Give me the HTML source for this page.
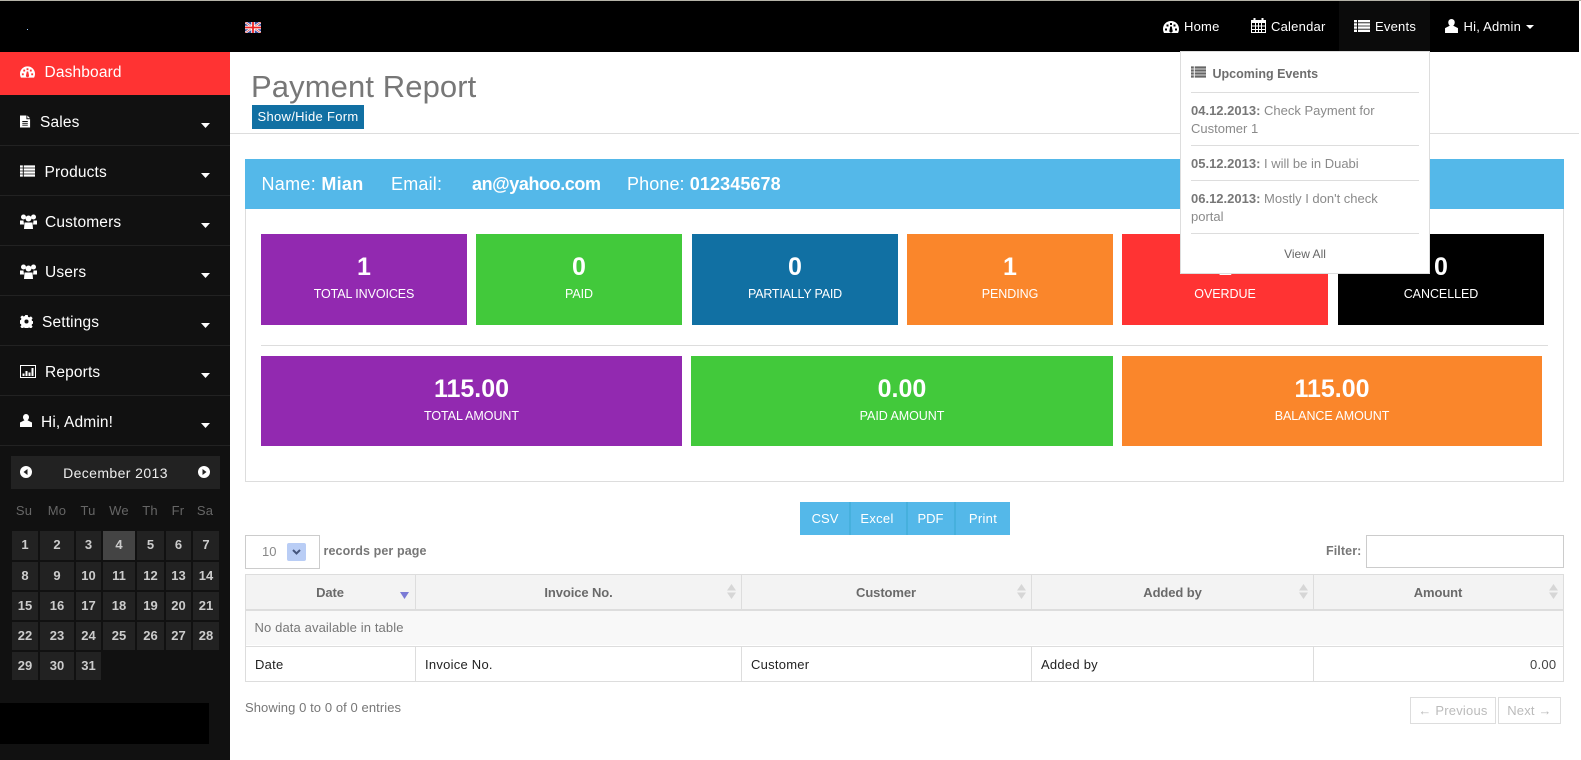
<!DOCTYPE html>
<html><head><meta charset="utf-8"><title>Payment Report</title>
<style>
*{box-sizing:border-box}
html,body{margin:0;padding:0;width:1581px;height:760px;overflow:hidden;background:#fff;font-family:"Liberation Sans",Arial,sans-serif}
.a{position:absolute}
.t{position:absolute;white-space:nowrap;line-height:20px;height:20px}
.s{font-size:15.500px;color:#fff;letter-spacing:.15px}
.n{font-size:13px;color:#fff;letter-spacing:.22px}
.c{text-align:center;transform:translateX(-50%)}
.d{position:absolute;background:#222;color:#ccc;font-size:13px;font-weight:bold;text-align:center;line-height:28px}
.w{position:absolute;top:501px;color:#666;font-size:13px;line-height:20px;transform:translateX(-50%);letter-spacing:.2px}
.card{position:absolute;color:#fff;text-align:center}
.card b{position:absolute;left:0;right:0;font-size:25px;line-height:28px;font-weight:bold;top:19px}
.card span{position:absolute;left:0;right:0;font-size:12.500px;line-height:18px;letter-spacing:-.05px;top:51px}
.l{position:absolute;background:#ddd}
.th{position:absolute;top:583px;font-size:13px;font-weight:bold;color:#6a6a6a;line-height:20px;transform:translateX(-50%);letter-spacing:-.1px;white-space:nowrap}
.td{position:absolute;top:655px;font-size:13px;color:#222;line-height:20px;letter-spacing:.25px;white-space:nowrap}
.g{color:#777;font-size:13px;letter-spacing:.12px}
.e{color:#8a8a8a;font-size:13px;letter-spacing:0;line-height:18px;left:1191px;position:absolute;white-space:nowrap}
.e b{color:#777}
svg{position:absolute;display:block}
</style></head><body>
<svg width="0" height="0" style="position:absolute">
<defs>
<symbol id="dash" viewBox="0 0 16 12"><path fill="currentColor" fill-rule="evenodd" d="M8 0C3.6 0 0 3.3 0 8c0 1.500.4 2.800 1 4h14c.6-1.200 1-2.500 1-4 0-4.700-3.600-8-8-8zM7 2h2v2H7zM3.500 3.500h2v2h-2zM10.500 3.500h2v2h-2zM2 7.500h2v2H2zM12 7.500h2v2h-2zM7.200 5.500h1.600l.7 3.600A1.700 1.700 0 1 1 6.500 9.100z"/></symbol>
<symbol id="file" viewBox="0 0 12 13"><path fill="currentColor" fill-rule="evenodd" d="M0 0h7v4h4v9H0zM8 0l3 3H8zM2.500 6v1h6V6zM2.500 8v1h6V8zM2.500 10v1h6v-1z"/></symbol>
<symbol id="list" viewBox="0 0 16 12"><path fill="currentColor" d="M0 0h3v2.400H0zM4 0h12v2.400H4zM0 3.200h3v2.400H0zM4 3.200h12v2.400H4zM0 6.400h3v2.400H0zM4 6.400h12v2.400H4zM0 9.600h3V12H0zM4 9.600h12V12H4z"/></symbol>
<symbol id="group" viewBox="0 0 17 15"><g fill="currentColor"><circle cx="3.500" cy="3" r="2.500"/><circle cx="13.500" cy="3" r="2.500"/><circle cx="8.500" cy="4.500" r="3"/><path d="M0 6.500h3.500L4 10.500H0zM13.500 6.500H17v4h-4zM4.500 8.500h8l.5 6.500H4z"/></g></symbol>
<symbol id="cog" viewBox="0 0 14 14"><path fill="currentColor" fill-rule="evenodd" d="M5.700 0h2.600l.4 2 1.300.6 1.800-1.100 1.800 1.800-1.100 1.800.5 1.300 2 .4v2.400l-2 .5-.5 1.200 1.100 1.800-1.800 1.800-1.800-1.100-1.300.5-.4 2H5.700l-.4-2-1.300-.5-1.800 1.100-1.800-1.800 1.100-1.800-.5-1.200-2-.5V5.800l2-.4.5-1.300-1.100-1.800 1.800-1.800L4 1.600l1.300-.6zM7 4.800a2.200 2.200 0 1 0 0 4.400 2.200 2.200 0 0 0 0-4.400z"/></symbol>
<symbol id="chart" viewBox="0 0 16 13"><path fill="currentColor" fill-rule="evenodd" d="M0 0h16v13H0zM1 1v11h14V1z"/><path fill="currentColor" d="M2.500 8.500h2V11h-2zM5.500 6h2v5h-2zM8.500 7.500h2V11h-2zM11.500 3h2v8h-2z"/></symbol>
<symbol id="user" viewBox="0 0 12 13"><path fill="currentColor" d="M6 0a3 3 0 0 1 3 3.200c0 1.300-.8 2.500-1.500 3l4.500 2.300V13H0V8.500l4.500-2.300C3.800 5.700 3 4.500 3 3.200A3 3 0 0 1 6 0z"/></symbol>
<symbol id="cal" viewBox="0 0 15 15"><path fill="currentColor" fill-rule="evenodd" d="M2.500 0h2v2h6V0h2v2H15v13H0V2h2.500zM1 5v2.500h3V5zM5 5v2.500h2V5zM8 5v2.500h2V5zM11 5v2.500h3V5zM1 8.500V11h3V8.500zM5 8.500V11h2V8.500zM8 8.500V11h2V8.500zM11 8.500V11h3V8.500zM1 12v2h3v-2zM5 12v2h2v-2zM8 12v2h2v-2zM11 12v2h3v-2z"/></symbol>
<symbol id="sort" viewBox="0 0 9 15"><path fill="#d6d6d6" d="M4.500 0L9 6.500H0zM0 8.500h9L4.500 15z"/></symbol>
</defs></svg>

<!-- top bar -->
<div class="a" style="left:0;top:0;width:1581px;height:1px;background:#b5b3a8"></div>
<div class="a" style="left:0;top:1px;width:1579px;height:51px;background:#000"></div>
<div class="a" style="left:27px;top:29px;width:1px;height:1px;background:#9cf"></div>
<svg style="left:245px;top:22px" width="16" height="11" viewBox="0 0 16 11"><rect width="16" height="11" fill="#3b4d9e"/><path d="M0 0L16 11M16 0L0 11" stroke="#fff" stroke-width="2.200"/><path d="M0 0L16 11M16 0L0 11" stroke="#d33" stroke-width=".7"/><path d="M8 0v11M0 5.500h16" stroke="#fff" stroke-width="3.500"/><path d="M8 0v11M0 5.500h16" stroke="#e22" stroke-width="1.800"/></svg>
<div class="a" style="left:1339px;top:1px;width:91px;height:51px;background:#0b0b0b"></div>
<svg style="left:1163px;top:21px;color:#fff" width="16" height="12"><use href="#dash"/></svg>
<div class="t n" style="left:1184px;top:17px">Home</div>
<svg style="left:1251px;top:18px;color:#fff" width="15" height="15"><use href="#cal"/></svg>
<div class="t n" style="left:1271px;top:17px">Calendar</div>
<svg style="left:1354px;top:20px;color:#fff" width="16" height="12"><use href="#list"/></svg>
<div class="t n" style="left:1375px;top:17px">Events</div>
<svg style="left:1445px;top:19px;color:#fff" width="13" height="14"><use href="#user"/></svg>
<div class="t n" style="left:1463.500px;top:17px">Hi, Admin</div>
<svg style="left:1526px;top:25px" width="8" height="4"><path d="M0 0h8L4 4z" fill="#fff"/></svg>

<!-- sidebar -->
<div class="a" style="left:0;top:52px;width:230px;height:708px;background:#111"></div>
<div class="a" style="left:0;top:52px;width:230px;height:43px;background:#f33"></div>
<div class="l" style="left:0;top:145px;width:230px;height:1px;background:#222"></div>
<div class="l" style="left:0;top:195px;width:230px;height:1px;background:#222"></div>
<div class="l" style="left:0;top:245px;width:230px;height:1px;background:#222"></div>
<div class="l" style="left:0;top:295px;width:230px;height:1px;background:#222"></div>
<div class="l" style="left:0;top:345px;width:230px;height:1px;background:#222"></div>
<div class="l" style="left:0;top:395px;width:230px;height:1px;background:#222"></div>
<div class="l" style="left:0;top:445px;width:230px;height:1px;background:#222"></div>

<svg style="left:20px;top:66px;color:#fff" width="15" height="12"><use href="#dash"/></svg>
<div class="t s" style="left:44.500px;top:63px">Dashboard</div>
<svg style="left:20px;top:115px;color:#fff" width="11" height="13"><use href="#file"/></svg>
<div class="t s" style="left:40px;top:113px">Sales</div>
<svg style="left:20px;top:165px;color:#fff" width="15" height="12"><use href="#list"/></svg>
<div class="t s" style="left:44.500px;top:163px">Products</div>
<svg style="left:20px;top:214px;color:#fff" width="17" height="15"><use href="#group"/></svg>
<div class="t s" style="left:45px;top:213px">Customers</div>
<svg style="left:20px;top:264px;color:#fff" width="17" height="15"><use href="#group"/></svg>
<div class="t s" style="left:45px;top:263px">Users</div>
<svg style="left:20px;top:315px;color:#fff" width="13" height="13"><use href="#cog"/></svg>
<div class="t s" style="left:42px;top:313px">Settings</div>
<svg style="left:20px;top:365px;color:#fff" width="16" height="13"><use href="#chart"/></svg>
<div class="t s" style="left:45px;top:363px">Reports</div>
<svg style="left:20px;top:414px;color:#fff" width="12" height="13"><use href="#user"/></svg>
<div class="t s" style="left:41px;top:413px">Hi, Admin!</div>
<svg style="left:201px;top:123px" width="9" height="5"><path d="M0 0h9L4.500 5z" fill="#fff"/></svg>
<svg style="left:201px;top:173px" width="9" height="5"><path d="M0 0h9L4.500 5z" fill="#fff"/></svg>
<svg style="left:201px;top:223px" width="9" height="5"><path d="M0 0h9L4.500 5z" fill="#fff"/></svg>
<svg style="left:201px;top:273px" width="9" height="5"><path d="M0 0h9L4.500 5z" fill="#fff"/></svg>
<svg style="left:201px;top:323px" width="9" height="5"><path d="M0 0h9L4.500 5z" fill="#fff"/></svg>
<svg style="left:201px;top:373px" width="9" height="5"><path d="M0 0h9L4.500 5z" fill="#fff"/></svg>
<svg style="left:201px;top:423px" width="9" height="5"><path d="M0 0h9L4.500 5z" fill="#fff"/></svg>

<!-- calendar -->
<div class="a" style="left:11px;top:456px;width:209px;height:33px;background:#222"></div>
<svg style="left:20px;top:466px" width="12" height="12" viewBox="0 0 12 12"><circle cx="6" cy="6" r="6" fill="#fff"/><path d="M7.500 3v6L3.500 6z" fill="#222"/></svg>
<svg style="left:198px;top:466px" width="12" height="12" viewBox="0 0 12 12"><circle cx="6" cy="6" r="6" fill="#fff"/><path d="M4.500 3v6L8.500 6z" fill="#222"/></svg>
<div class="t c" style="left:115.500px;top:463px;color:#eee;font-size:14px;letter-spacing:.4px">December 2013</div>
<div class="w" style="left:24px">Su</div><div class="w" style="left:57px">Mo</div><div class="w" style="left:88px">Tu</div><div class="w" style="left:119px">We</div><div class="w" style="left:150px">Th</div><div class="w" style="left:178px">Fr</div><div class="w" style="left:205px">Sa</div>

<div class="d" style="left:12px;top:531px;width:26px;height:29px">1</div><div class="d" style="left:40px;top:531px;width:34px;height:29px">2</div><div class="d" style="left:76px;top:531px;width:25px;height:29px">3</div><div class="d" style="left:103px;top:531px;width:32px;height:29px;background:#444">4</div><div class="d" style="left:137px;top:531px;width:27px;height:29px">5</div><div class="d" style="left:166px;top:531px;width:25px;height:29px">6</div><div class="d" style="left:193px;top:531px;width:26px;height:29px">7</div>
<div class="d" style="left:12px;top:562px;width:26px;height:28px">8</div><div class="d" style="left:40px;top:562px;width:34px;height:28px">9</div><div class="d" style="left:76px;top:562px;width:25px;height:28px">10</div><div class="d" style="left:103px;top:562px;width:32px;height:28px">11</div><div class="d" style="left:137px;top:562px;width:27px;height:28px">12</div><div class="d" style="left:166px;top:562px;width:25px;height:28px">13</div><div class="d" style="left:193px;top:562px;width:26px;height:28px">14</div>
<div class="d" style="left:12px;top:592px;width:26px;height:28px">15</div><div class="d" style="left:40px;top:592px;width:34px;height:28px">16</div><div class="d" style="left:76px;top:592px;width:25px;height:28px">17</div><div class="d" style="left:103px;top:592px;width:32px;height:28px">18</div><div class="d" style="left:137px;top:592px;width:27px;height:28px">19</div><div class="d" style="left:166px;top:592px;width:25px;height:28px">20</div><div class="d" style="left:193px;top:592px;width:26px;height:28px">21</div>
<div class="d" style="left:12px;top:622px;width:26px;height:28px">22</div><div class="d" style="left:40px;top:622px;width:34px;height:28px">23</div><div class="d" style="left:76px;top:622px;width:25px;height:28px">24</div><div class="d" style="left:103px;top:622px;width:32px;height:28px">25</div><div class="d" style="left:137px;top:622px;width:27px;height:28px">26</div><div class="d" style="left:166px;top:622px;width:25px;height:28px">27</div><div class="d" style="left:193px;top:622px;width:26px;height:28px">28</div>
<div class="d" style="left:12px;top:652px;width:26px;height:28px">29</div><div class="d" style="left:40px;top:652px;width:34px;height:28px">30</div><div class="d" style="left:76px;top:652px;width:25px;height:28px">31</div>
<div class="a" style="left:0;top:703px;width:209px;height:41px;background:#000"></div>

<!-- header -->
<div class="t" style="left:251px;top:67px;height:40px;line-height:40px;font-size:31px;color:#777;letter-spacing:.1px">Payment Report</div>
<div class="a" style="left:252px;top:105px;width:112px;height:24px;background:#1170a3;color:#fff;font-size:13px;line-height:24px;text-align:center;letter-spacing:.3px">Show/Hide Form</div>
<div class="l" style="left:230px;top:133px;width:1349px;height:1px"></div>

<!-- info box -->
<div class="a" style="left:245px;top:159px;width:1319px;height:323px;border:1px solid #ddd"></div>
<div class="a" style="left:245px;top:159px;width:1319px;height:50px;background:#54b8e9"></div>
<div class="t" style="left:261.500px;top:174px;color:#fff;font-size:18px;letter-spacing:.3px">Name: <b>Mian</b></div>
<div class="t" style="left:391px;top:174px;color:#fff;font-size:18px;letter-spacing:.2px">Email:</div>
<div class="t" style="left:472px;top:174px;color:#fff;font-size:18px;font-weight:bold;letter-spacing:-.42px">an@yahoo.com</div>
<div class="t" style="left:627px;top:174px;color:#fff;font-size:18px;letter-spacing:.1px">Phone: <b>012345678</b></div>

<!-- cards -->
<div class="card" style="left:261px;top:234px;width:206px;height:91px;background:#9229b0"><b>1</b><span style="letter-spacing:-.1px">TOTAL INVOICES</span></div>
<div class="card" style="left:476px;top:234px;width:206px;height:91px;background:#42c93b"><b>0</b><span>PAID</span></div>
<div class="card" style="left:692px;top:234px;width:206px;height:91px;background:#1170a3"><b>0</b><span style="letter-spacing:-.2px">PARTIALLY PAID</span></div>
<div class="card" style="left:907px;top:234px;width:206px;height:91px;background:#fa862b"><b>1</b><span>PENDING</span></div>
<div class="card" style="left:1122px;top:234px;width:206px;height:91px;background:#f33"><b>1</b><span>OVERDUE</span></div>
<div class="card" style="left:1338px;top:234px;width:206px;height:91px;background:#000"><b>0</b><span>CANCELLED</span></div>
<div class="l" style="left:261px;top:345px;width:1287px;height:1px"></div>
<div class="card" style="left:261px;top:356px;width:421px;height:90px;background:#9229b0"><b>115.00</b><span>TOTAL AMOUNT</span></div>
<div class="card" style="left:691px;top:356px;width:422px;height:90px;background:#42c93b"><b>0.00</b><span>PAID AMOUNT</span></div>
<div class="card" style="left:1122px;top:356px;width:420px;height:90px;background:#fa862b"><b>115.00</b><span>BALANCE AMOUNT</span></div>

<!-- export -->
<div class="a" style="left:800px;top:502px;width:210px;height:33px;background:#54b8e9"></div>
<div class="a" style="left:849px;top:502px;width:2px;height:33px;background:#46b0dd"></div>
<div class="a" style="left:906px;top:502px;width:2px;height:33px;background:#46b0dd"></div>
<div class="a" style="left:954px;top:502px;width:2px;height:33px;background:#46b0dd"></div>
<div class="t c" style="left:825px;top:509px;color:#fff;font-size:13px">CSV</div>
<div class="t c" style="left:877px;top:509px;color:#fff;font-size:13px;letter-spacing:.3px">Excel</div>
<div class="t c" style="left:930.500px;top:509px;color:#fff;font-size:13px">PDF</div>
<div class="t c" style="left:983px;top:509px;color:#fff;font-size:13px;letter-spacing:.3px">Print</div>

<!-- table controls -->
<div class="a" style="left:245px;top:535px;width:75px;height:34px;border:1px solid #ccc;background:#fff"></div>
<div class="t" style="left:262px;top:542px;color:#888;font-size:13px">10</div>
<div class="a" style="left:287px;top:543px;width:19px;height:18px;background:#b9cdf5;border-radius:2px"></div>
<svg style="left:292px;top:549px" width="9" height="6"><path d="M1 1l3.500 3.500L8 1" stroke="#45557d" stroke-width="2" fill="none"/></svg>
<div class="t" style="left:323.500px;top:541px;font-size:12.500px;font-weight:bold;color:#777;letter-spacing:.1px">records per page</div>
<div class="t" style="left:1326px;top:541px;font-size:12.500px;font-weight:bold;color:#777;letter-spacing:.1px">Filter:</div>
<div class="a" style="left:1366px;top:535px;width:198px;height:33px;border:1px solid #ccc;background:#fff"></div>

<!-- table -->
<div class="a" style="left:245px;top:574px;width:1319px;height:108px;border:1px solid #ddd;background:#fff"></div>
<div class="a" style="left:246px;top:575px;width:1317px;height:34px;background:#f3f3f3"></div>
<div class="a" style="left:246px;top:609px;width:1317px;height:36px;background:#f8f8f8"></div>
<div class="l" style="left:246px;top:609px;width:1317px;height:2px"></div>
<div class="l" style="left:246px;top:646px;width:1317px;height:1px"></div>
<div class="l" style="left:415px;top:575px;width:1px;height:35px"></div>
<div class="l" style="left:741px;top:575px;width:1px;height:35px"></div>
<div class="l" style="left:1031px;top:575px;width:1px;height:35px"></div>
<div class="l" style="left:1313px;top:575px;width:1px;height:35px"></div>
<div class="l" style="left:415px;top:647px;width:1px;height:34px"></div>
<div class="l" style="left:741px;top:647px;width:1px;height:34px"></div>
<div class="l" style="left:1031px;top:647px;width:1px;height:34px"></div>
<div class="l" style="left:1313px;top:647px;width:1px;height:34px"></div>
<div class="th" style="left:330px">Date</div>
<div class="th" style="left:578.500px">Invoice No.</div>
<div class="th" style="left:886px">Customer</div>
<div class="th" style="left:1172.500px">Added by</div>
<div class="th" style="left:1438px">Amount</div>
<svg style="left:400px;top:592px" width="9" height="7"><path d="M0 0h9L4.500 7z" fill="#7b7bd6"/></svg>
<svg style="left:727px;top:584px" width="9" height="15"><use href="#sort"/></svg>
<svg style="left:1017px;top:584px" width="9" height="15"><use href="#sort"/></svg>
<svg style="left:1299px;top:584px" width="9" height="15"><use href="#sort"/></svg>
<svg style="left:1549px;top:584px" width="9" height="15"><use href="#sort"/></svg>
<div class="t g" style="left:254.500px;top:618px">No data available in table</div>
<div class="td" style="left:255px">Date</div>
<div class="td" style="left:425px">Invoice No.</div>
<div class="td" style="left:751px">Customer</div>
<div class="td" style="left:1041px">Added by</div>
<div class="td" style="left:1530px;color:#444">0.00</div>
<div class="t g" style="left:245px;top:698px;letter-spacing:.08px">Showing 0 to 0 of 0 entries</div>
<div class="a" style="left:1410px;top:697px;width:86px;height:27px;border:1px solid #ddd;color:#bbb;font-size:13px;line-height:25px;text-align:center;letter-spacing:.2px">&#8592; Previous</div>
<div class="a" style="left:1498px;top:697px;width:63px;height:27px;border:1px solid #ddd;color:#bbb;font-size:13px;line-height:25px;text-align:center;letter-spacing:.2px">Next &#8594;</div>

<!-- dropdown -->
<div class="a" style="left:1180px;top:51px;width:250px;height:223px;background:#fff;border:1px solid #ddd"></div>
<svg style="left:1191px;top:66px;color:#666" width="15" height="12"><use href="#list"/></svg>
<div class="t" style="left:1212.500px;top:64px;font-size:12.500px;font-weight:bold;color:#6e6e6e;letter-spacing:0">Upcoming Events</div>
<div class="l" style="left:1191px;top:92px;width:228px;height:1px"></div>
<div class="e" style="top:102px"><b>04.12.2013:</b> Check Payment for<br>Customer 1</div>
<div class="l" style="left:1191px;top:145px;width:228px;height:1px"></div>
<div class="e" style="top:155px"><b>05.12.2013:</b> I will be in Duabi</div>
<div class="l" style="left:1191px;top:180px;width:228px;height:1px"></div>
<div class="e" style="top:190px"><b>06.12.2013:</b> Mostly I don't check<br>portal</div>
<div class="l" style="left:1191px;top:233px;width:228px;height:1px"></div>
<div class="t c" style="left:1305px;top:244px;font-size:12px;color:#666">View All</div>
</body></html>
